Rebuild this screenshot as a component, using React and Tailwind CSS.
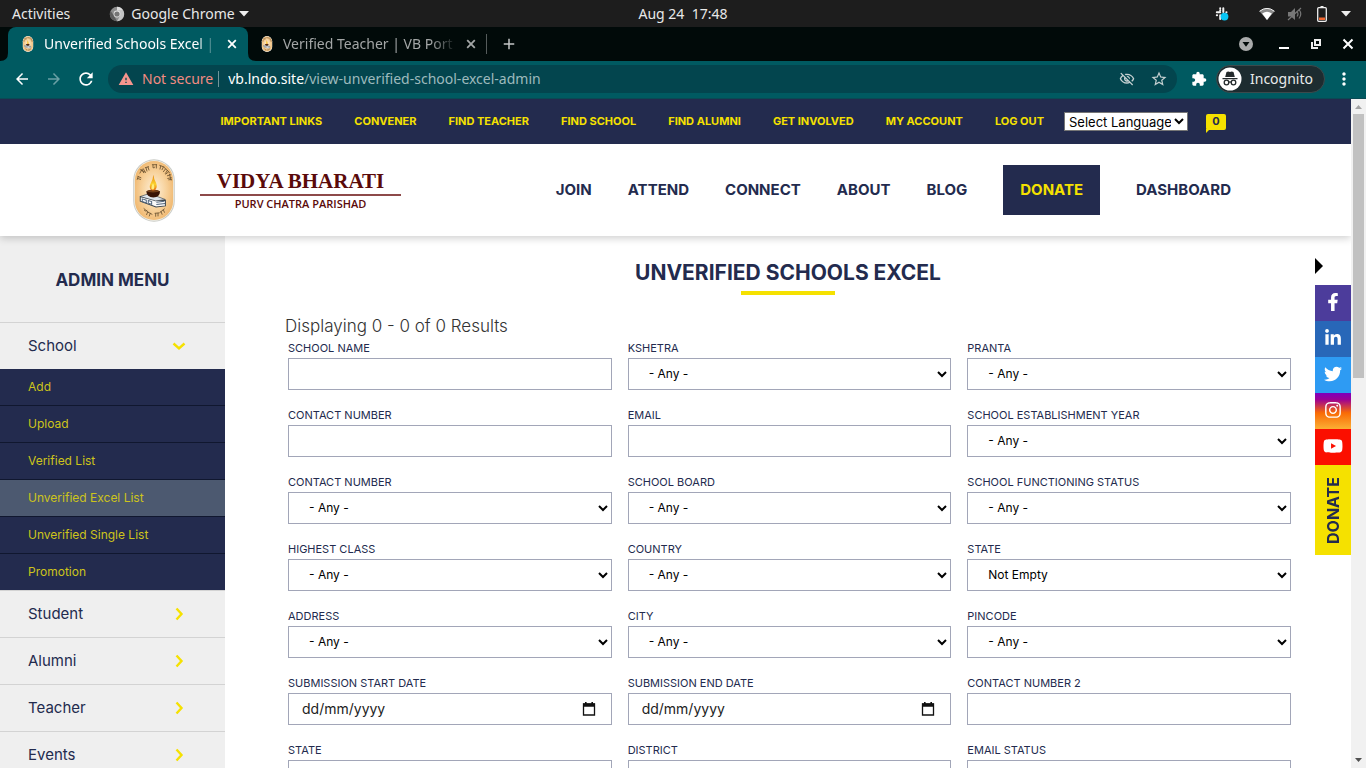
import React from "react";
import {
  MdArrowBack,
  MdArrowForward,
  MdRefresh,
  MdWarning,
  MdOutlineVisibilityOff,
  MdStarOutline,
  MdExtension,
  MdMoreVert,
  MdAdd,
} from "react-icons/md";
import { FaFacebookF, FaLinkedinIn, FaTwitter, FaInstagram, FaYoutube } from "react-icons/fa";

const topLinks = [
  "IMPORTANT LINKS",
  "CONVENER",
  "FIND TEACHER",
  "FIND SCHOOL",
  "FIND ALUMNI",
  "GET INVOLVED",
  "MY ACCOUNT",
  "LOG OUT",
];

const schoolItems = [
  "Add",
  "Upload",
  "Verified List",
  "Unverified Excel List",
  "Unverified Single List",
  "Promotion",
];

const fields = [
  { label: "SCHOOL NAME", type: "text" },
  { label: "KSHETRA", type: "select" },
  { label: "PRANTA", type: "select" },
  { label: "CONTACT NUMBER", type: "text" },
  { label: "EMAIL", type: "text" },
  { label: "SCHOOL ESTABLISHMENT YEAR", type: "select" },
  { label: "CONTACT NUMBER", type: "select" },
  { label: "SCHOOL BOARD", type: "select" },
  { label: "SCHOOL FUNCTIONING STATUS", type: "select" },
  { label: "HIGHEST CLASS", type: "select" },
  { label: "COUNTRY", type: "select" },
  { label: "STATE", type: "select", value: "Not Empty" },
  { label: "ADDRESS", type: "select" },
  { label: "CITY", type: "select" },
  { label: "PINCODE", type: "select" },
  { label: "SUBMISSION START DATE", type: "date" },
  { label: "SUBMISSION END DATE", type: "date" },
  { label: "CONTACT NUMBER 2", type: "text" },
  { label: "STATE", type: "text" },
  { label: "DISTRICT", type: "text" },
  { label: "EMAIL STATUS", type: "text" },
];

function Emblem({ className }) {
  return (
    <svg viewBox="0 0 126 188" className={className} aria-hidden="true">
      <defs>
        <radialGradient id="emblemGlow" cx="50%" cy="50%" r="60%">
          <stop offset="0" stopColor="#fdf0dc" />
          <stop offset="0.5" stopColor="#f8d4a0" />
          <stop offset="1" stopColor="#eeb266" />
        </radialGradient>
        <linearGradient id="emblemFlame" x1="0" y1="0" x2="0" y2="1">
          <stop offset="0" stopColor="#e8860c" />
          <stop offset="0.6" stopColor="#fbd22c" />
          <stop offset="1" stopColor="#e56a10" />
        </linearGradient>
      </defs>
      <rect x="1" y="1" width="124" height="186" rx="62" fill="#c9cbc6" />
      <rect x="4" y="4" width="118" height="180" rx="59" fill="#f3f0e6" />
      <rect x="6" y="6" width="114" height="176" rx="57" fill="url(#emblemGlow)" />
      <g stroke="#6e5532" strokeWidth="2.600" fill="none" strokeLinecap="round">
        <path d="M14 58l9 3M15 52l9 4M13 61l3-9M21 42l6-10M22 32l16 8M27 31l5 10M31 29l5 9M37 26l10-3M39 26l3 10M45 24l3 9M58 17h13M60 18v8q5 2 5-2M70 17v10" />
        <path d="M80 19l13 5M83 21l-2 9M91 24l-4 8M94 26l15 14M97 30l-6 8M103 34l-6 9M106 39l-8 6M109 45l5 18M103 50l10-3M104 58l11-2M107 62l8-1" />
        <path d="M33 148l14 12M34 153q4 5 8 1M44 158l-3 8M48 160l9 5M52 162l-3 8M66 162l11-1M68 163v8M75 162v8M80 160l14-11M84 157l3 8M91 152l3 7" />
      </g>
      <path d="M22 112l46 11 29 1v16l-28 3-47-17z" fill="#fafafa" stroke="#39424a" strokeWidth="3" />
      <path d="M22 112l27-9 48 18-29 4z" fill="#dfe5ec" stroke="#39424a" strokeWidth="2" />
      <path d="M28 119l12 4v8l-12-4zM46 124l10 3v8l-10-3zM70 129l24-3M70 136l26-3" fill="none" stroke="#53677e" strokeWidth="3" />
      <path d="M40 96q20-10 41 0q0 17-20 19q-20-2-21-19z" fill="#391407" />
      <ellipse cx="60" cy="96" rx="18" ry="4" fill="#74401a" />
      <path d="M61 47q2 15 8 24q5 12-1 20q-8 6-15 0q-6-9 1-20q6-10 7-24z" fill="url(#emblemFlame)" />
      <path d="M60 72q7 10 2 18q-6 3-7-3q0-6 5-15z" fill="#ffee7a" />
    </svg>
  );
}

function CloseIcon() {
  return (
    <svg viewBox="0 0 14 14" className="size-[14px]" stroke="currentColor" strokeWidth="1.800" aria-hidden="true">
      <path d="M3.200 3.200l7.600 7.600M10.800 3.200l-7.600 7.600" />
    </svg>
  );
}

function SystemBar() {
  return (
    <div className="grid h-[27px] shrink-0 grid-cols-3 items-center bg-[#1d1d1d] text-sm text-[#e8e8e8]">
      <div className="flex items-center pl-3">
        <button type="button">Activities</button>
        <button type="button" className="ml-[39px] flex items-center">
          <svg viewBox="0 0 16 16" className="mr-[6px] size-4" aria-hidden="true">
            <circle cx="8" cy="8" r="7.2" fill="#8d8d8d" />
            <path d="M8 .8a7.2 7.2 0 0 1 6.4 4H8z" fill="#dcdcdc" />
            <path d="M8 15.200A7.200 7.200 0 0 0 14.400 4.800H8L11 10z" fill="#c4c4c4" />
            <path d="M1.500 4.800L5 9.800L8 15.200A7.200 7.200 0 0 1 1.500 4.800z" fill="#5c5c5c" />
            <circle cx="8" cy="8" r="3.400" fill="#e4e4e4" />
            <circle cx="8" cy="8" r="2.600" fill="#757575" />
          </svg>
          Google Chrome
          <svg viewBox="0 0 10 6" className="ml-1 h-[6px] w-[10px]" aria-hidden="true">
            <path d="M0 0h10L5 5.500z" fill="#eee" />
          </svg>
        </button>
      </div>
      <button type="button" className="whitespace-pre text-center">Aug 24  17:48</button>
      <div className="flex items-center justify-end pr-[15px]">
        <svg viewBox="0 0 16 16" className="mr-[29px] size-4" aria-hidden="true">
          <g stroke="#f2f2f2" strokeWidth="2" strokeLinecap="round" fill="none">
            <path d="M6.200 4.300v.1M6.200 6.300H2.800M9.300 2.300v3.800M12.300 6.300h.2M2.800 9.300h.3M6.200 9.300v3.600M6.200 2.300v.3" />
          </g>
          <circle cx="10.500" cy="10.600" r="3.900" fill="#08c5f4" />
        </svg>
        <svg viewBox="0 0 16 12" className="mr-3 h-3 w-4" aria-hidden="true">
          <path d="M.5 3.300Q8-2.600 15.500 3.300L8 12z" fill="#8a8a8a" />
          <path d="M.5 3.300Q8-2.600 15.500 3.300" fill="none" stroke="#f5f5f5" />
          <path d="M3.200 5.400Q8 2.300 12.800 5.400L8 12z" fill="#fff" />
        </svg>
        <svg viewBox="0 0 16 14" className="mr-[14px] h-[14px] w-4" aria-hidden="true">
          <path d="M1 5h3l4-4v12L4 9.500H1z" fill="#777" />
          <path d="M10 4.500q2 2.500 0 5M12 2.500q3.500 4.500 0 9M1 13L14 1" fill="none" stroke="#777" strokeWidth="1.200" />
        </svg>
        <svg viewBox="0 0 10 16" className="mr-[14px] h-4 w-[10px]" aria-hidden="true">
          <path d="M3.500 0h3v2h-3z" fill="#eee" />
          <rect x=".7" y="1.700" width="8.600" height="13.600" rx="1" fill="none" stroke="#eee" strokeWidth="1.300" />
          <path d="M2 11.500h6V14H2z" fill="#f0662f" />
        </svg>
        <svg viewBox="0 0 10 6" className="h-[6px] w-[10px]" aria-hidden="true">
          <path d="M0 0h10L5 5.500z" fill="#eee" />
        </svg>
      </div>
    </div>
  );
}

function TabStrip() {
  return (
    <div className="flex h-[34px] shrink-0 items-center bg-[#010a09] pl-2 text-sm">
      <div className="relative flex h-full w-60 items-center rounded-t-lg bg-[#005a61] pl-[14px] text-white">
        <svg viewBox="0 0 8 8" className="absolute bottom-0 -left-2 size-2" aria-hidden="true">
          <path d="M8 0v8H0Q8 8 8 0z" fill="#005a61" />
        </svg>
        <svg viewBox="0 0 8 8" className="absolute -right-2 bottom-0 size-2" aria-hidden="true">
          <path d="M0 0v8h8Q0 8 0 0z" fill="#005a61" />
        </svg>
        <Emblem className="mr-[10px] h-4 w-3" />
        <span className="w-[173px] whitespace-nowrap [mask-image:linear-gradient(to_right,#000_88%,transparent)]">
          Unverified Schools Excel |
        </span>
        <button type="button" aria-label="Close tab" className="ml-2">
          <CloseIcon />
        </button>
      </div>
      <div className="flex h-full w-[238px] items-center pl-[13px] text-[#a3a6a6]">
        <Emblem className="mr-[10px] h-4 w-3" />
        <span className="w-[174px] whitespace-nowrap [mask-image:linear-gradient(to_right,#000_85%,transparent)]">
          Verified Teacher | VB Port
        </span>
        <button type="button" aria-label="Close tab" className="ml-[7px]">
          <CloseIcon />
        </button>
      </div>
      <div className="h-5 w-px bg-[#555b5b]" />
      <button type="button" aria-label="New tab" className="ml-[13px] text-[#c3c6c6]">
        <MdAdd className="size-[18px]" />
      </button>
      <div className="ml-auto flex items-center gap-[18px] pr-[11px] text-white">
        <button type="button" aria-label="Search tabs" className="mr-[6px]">
          <svg viewBox="0 0 14 14" className="size-[14px]">
            <circle cx="7" cy="7" r="7" fill="#a9abab" />
            <path d="M3.500 5h7L7 9.800z" fill="#010a09" />
          </svg>
        </button>
        <button type="button" aria-label="Minimize">
          <svg viewBox="0 0 14 14" className="size-[14px]">
            <path d="M2 10h10v2H2z" fill="#fff" />
          </svg>
        </button>
        <button type="button" aria-label="Restore">
          <svg viewBox="0 0 14 14" className="size-[14px]" fill="none" stroke="#eee" strokeWidth="2">
            <path d="M6 3h5v5H6zM3 5v6h6" />
          </svg>
        </button>
        <button type="button" aria-label="Close window">
          <svg viewBox="0 0 14 14" className="size-[14px]" stroke="#fff" strokeWidth="2">
            <path d="M2.500 2.500l9 9M11.500 2.500l-9 9" />
          </svg>
        </button>
      </div>
    </div>
  );
}

function Toolbar() {
  return (
    <div className="flex h-[38px] shrink-0 items-center border-b border-[#0a4a54] bg-[#005a61] pr-3 pb-px pl-[13px] text-sm text-white">
      <button type="button" aria-label="Back" className="mr-[14px]">
        <MdArrowBack className="size-[18px]" />
      </button>
      <button type="button" aria-label="Forward" className="mr-[13px] text-[#6aa0a5]">
        <MdArrowForward className="size-[18px]" />
      </button>
      <button type="button" aria-label="Reload">
        <MdRefresh className="size-5" />
      </button>
      <div className="ml-3 flex h-7 flex-1 items-center rounded-full bg-[#03454e] pr-[9px] pl-[10px]">
        <MdWarning className="mr-2 size-4 text-[#f6958d]" />
        <span className="text-[#f28b82]">Not secure</span>
        <div className="mr-[9px] ml-[5px] h-4 w-px bg-[#6f959a]" />
        <div className="flex-1 truncate text-[#9dbabd]">
          <span className="text-white">vb.lndo.site</span>/view-unverified-school-excel-admin
        </div>
        <button type="button" aria-label="Cookies blocked" className="mr-[15px] text-[#c5d0d1]">
          <MdOutlineVisibilityOff className="size-4" />
        </button>
        <button type="button" aria-label="Bookmark" className="text-[#c5d0d1]">
          <MdStarOutline className="size-[18px]" />
        </button>
      </div>
      <button type="button" aria-label="Extensions" className="ml-[14px]">
        <MdExtension className="size-4" />
      </button>
      <button type="button" className="ml-[9px] flex h-7 w-[109px] items-center gap-2 rounded-full border border-[#3c4a4c] bg-[#1d2c30] pl-px text-[#e8eaea]">
        <svg viewBox="0 0 24 24" className="size-6 shrink-0" aria-hidden="true">
          <circle cx="12" cy="12" r="11.500" fill="#fff" />
          <path d="M8.500 5l1.800-.6L12 5l1.700-.6 1.800.6 1.300 5H7.200zM4.500 11h15v1.300h-15z" fill="#232a2c" />
          <g fill="none" stroke="#232a2c" strokeWidth="1.300">
            <circle cx="8.500" cy="15.500" r="2.300" />
            <circle cx="15.500" cy="15.500" r="2.300" />
            <path d="M10.800 15.200q1.200-.8 2.400 0" />
          </g>
        </svg>
        Incognito
      </button>
      <button type="button" aria-label="Menu" className="ml-[9px]">
        <MdMoreVert className="size-5" />
      </button>
    </div>
  );
}

function SiteHeader() {
  const link = "text-[#232b4e]";
  return (
    <header className="relative z-10 bg-white shadow-[0_2px_8px_rgba(0,0,0,0.2)]">
      <div className="flex h-[45px] items-center justify-end bg-[#232b4e] pr-[125px]">
        <nav className="flex gap-8 text-[11px] font-bold text-[#f5e100]">
          {topLinks.map((text) => (
            <a key={text} href="#" className="whitespace-nowrap">{text}</a>
          ))}
        </nav>
        <select
          aria-label="Select Language"
          className="ml-5 h-[19px] w-[124px] border border-[#767676] bg-white text-[13px] leading-4 text-black"
        >
          <option>Select Language</option>
        </select>
        <a href="#" className="relative ml-[18px] flex h-4 w-5 items-center justify-center rounded-xs bg-[#f5e100] text-[11px] font-bold text-[#232b4e]">
          0
          <svg viewBox="0 0 4 4" className="absolute top-[15px] left-0 size-1" aria-hidden="true">
            <path d="M0 0h4L0 4z" fill="#f5e100" />
          </svg>
        </a>
      </div>
      <div className="flex h-[92px] items-center justify-between pr-[120px] pl-[132px]">
        <a href="#" className="flex items-center gap-6 text-[#5a0a0a]">
          <Emblem className="h-[63px] w-11" />
          <span className="flex w-[201px] flex-col items-center">
            <span className="w-full border-b-2 border-[#8d4a4a] text-center font-['Liberation_Serif',serif] text-[21px] leading-[26px] font-bold">
              VIDYA BHARATI
            </span>
            <span className="font-['Open_Sans',sans-serif] text-[11px] leading-4 font-semibold whitespace-nowrap">
              PURV CHATRA PARISHAD
            </span>
          </span>
        </a>
        <nav className="flex items-center gap-9 text-[15px] font-bold">
          <a href="#" className={link}>JOIN</a>
          <a href="#" className={link}>ATTEND</a>
          <a href="#" className={link}>CONNECT</a>
          <a href="#" className={link}>ABOUT</a>
          <a href="#" className={link}>BLOG</a>
          <a href="#" className="flex h-[50px] items-center bg-[#232b4e] px-[17px] text-[#f5e100]">DONATE</a>
          <a href="#" className={link}>DASHBOARD</a>
        </nav>
      </div>
    </header>
  );
}

function Chevron({ open }) {
  return (
    <svg viewBox="0 0 14 14" className="size-[14px]" fill="none" stroke="#f5e100" strokeWidth="2.400" aria-hidden="true">
      <path d={open ? "M1.500 4.500L7 9.500l5.500-5" : "M4.500 1.500L9.500 7l-5 5.500"} />
    </svg>
  );
}

function MenuRow({ text, open }) {
  return (
    <button
      type="button"
      aria-expanded={!!open}
      className="flex h-[47px] w-full items-center justify-between border-t border-[#d3d3d3] pr-[39px] pl-7 text-[15px] text-[#232b4e]"
    >
      {text}
      <Chevron open={open} />
    </button>
  );
}

function Sidebar() {
  return (
    <aside className="w-[225px] shrink-0 bg-[#efefef]">
      <h2 className="flex h-[86px] items-center justify-center pt-1 text-[17px] font-bold text-[#232b4e]">
        ADMIN MENU
      </h2>
      <MenuRow text="School" open />
      <div className="divide-y divide-[#10172f]">
        {schoolItems.map((text) => (
          <a
            key={text}
            href="#"
            className={
              "block pl-7 text-xs leading-9 text-[#cdc41b] " +
              (text === "Unverified Excel List" ? "bg-[#4c5970]" : "bg-[#232b4e]")
            }
          >
            {text}
          </a>
        ))}
      </div>
      <MenuRow text="Student" />
      <MenuRow text="Alumni" />
      <MenuRow text="Teacher" />
      <MenuRow text="Events" />
    </aside>
  );
}

function Field({ field, id }) {
  const box = "h-8 w-full border border-[#a2a6b8] bg-white text-black";
  return (
    <div>
      <label htmlFor={id} className="block pb-px text-[11px] leading-[18px] text-[#232b4e]">
        {field.label}
      </label>
      {field.type === "select" && (
        <select id={id} className={box + " pb-px pl-4 text-xs"}>
          <option>{field.value || "- Any -"}</option>
        </select>
      )}
      {field.type === "text" && <input id={id} type="text" className={box + " px-3 text-xs"} />}
      {field.type === "date" && (
        <div className={box + " flex items-center pr-[15px] pl-[13px]"}>
          <input
            id={id}
            type="text"
            placeholder="dd/mm/yyyy"
            className="min-w-0 flex-1 text-sm placeholder:text-[#222]"
          />
          <button type="button" aria-label="Open calendar">
            <svg viewBox="0 0 14 14" className="size-[14px]" aria-hidden="true">
              <path d="M1.500 2h11v11h-11z" fill="none" stroke="#111" strokeWidth="1.300" />
              <path d="M1 1.500h12v3.300H1zM3 0h1.600v2H3zM9.400 0H11v2H9.400z" fill="#111" />
            </svg>
          </button>
        </div>
      )}
    </div>
  );
}

function Main() {
  return (
    <main className="min-w-0 flex-1 bg-white pt-[25px]">
      <h1 className="text-center text-[21px] leading-6 font-bold text-[#232b4e]">UNVERIFIED SCHOOLS EXCEL</h1>
      <div className="mx-auto mt-[6px] h-1 w-[94px] bg-[#f5e100]" />
      <div className="pt-[19px] pr-15 pl-[63px]">
        <p className="-ml-[3px] text-[17px] leading-6 font-light text-[#333]">Displaying 0 - 0 of 0 Results</p>
        <form className="mt-px grid grid-cols-3 gap-4">
          {fields.map((field, i) => (
            <Field key={i} field={field} id={"filter-" + i} />
          ))}
        </form>
      </div>
    </main>
  );
}

function SocialBar() {
  const tile = "flex size-9 items-center justify-center pb-[2px] text-white";
  return (
    <div className="absolute top-[159px] right-0 z-20 flex w-9 flex-col">
      <button type="button" aria-label="Collapse" className="mb-[11px]">
        <svg viewBox="0 0 8 16" className="h-4 w-2" aria-hidden="true">
          <path d="M0 0l8 8-8 8z" fill="#000" />
        </svg>
      </button>
      <a href="#" aria-label="Facebook" className={tile + " bg-[#4c3c9b]"}><FaFacebookF className="size-[18px]" /></a>
      <a href="#" aria-label="LinkedIn" className={tile + " bg-[#2867b8]"}><FaLinkedinIn className="size-[18px]" /></a>
      <a href="#" aria-label="Twitter" className={tile + " bg-[#2e9bf3]"}><FaTwitter className="size-[18px]" /></a>
      <a href="#" aria-label="Instagram" className={tile + " bg-[linear-gradient(to_bottom,#7d00bd,#9c0095_18%,#f96a05_55%,#fbb034)]"}><FaInstagram className="size-[18px]" /></a>
      <a href="#" aria-label="YouTube" className={tile + " bg-[#fb0f00]"}><FaYoutube className="size-5" /></a>
      <a href="#" className="flex h-[90px] w-9 items-center justify-center bg-[#f5e100] text-base font-bold text-[#232b4e]">
        <span className="rotate-180 [writing-mode:vertical-rl]">DONATE</span>
      </a>
    </div>
  );
}

function Scrollbar() {
  return (
    <div className="flex w-[15px] shrink-0 flex-col items-center bg-[#f1f1f1]" aria-hidden="true">
      <svg viewBox="0 0 15 15" className="size-[15px]"><path d="M4 10h7L7.500 6z" fill="#a3a3a3" /></svg>
      <div className="w-[11px] flex-[264] bg-[#c1c1c1]" />
      <div className="flex-[375]" />
      <svg viewBox="0 0 15 15" className="size-[15px]"><path d="M4 5h7L7.500 9z" fill="#505050" /></svg>
    </div>
  );
}

export default function App() {
  return (
    <div className="flex h-screen flex-col overflow-hidden font-['Noto_Sans',sans-serif]">
      <SystemBar />
      <TabStrip />
      <Toolbar />
      <div className="flex min-h-0 flex-1 font-['Inter',sans-serif]">
        <div className="relative min-w-0 flex-1">
          <div className="h-full overflow-y-auto [scrollbar-width:none]">
            <SiteHeader />
            <div className="flex">
              <Sidebar />
              <Main />
            </div>
          </div>
          <SocialBar />
        </div>
        <Scrollbar />
      </div>
    </div>
  );
}
